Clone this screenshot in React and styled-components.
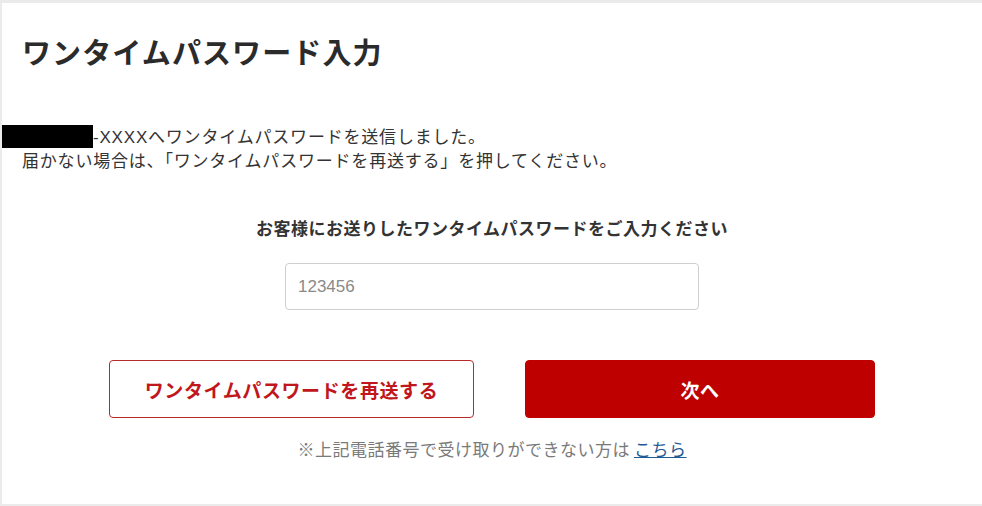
import React from 'react';
import styled, { createGlobalStyle } from 'styled-components';

const GlobalStyle = createGlobalStyle`
  html, body {
    margin: 0;
    padding: 0;
    background: #ebebeb;
  }
  body {
    font-family: "Liberation Sans", "Noto Sans CJK JP", sans-serif;
    color: #333;
  }
`;

const Card = styled.div`
  background: #fff;
  margin: 3px 0 0 2px;
  height: 501px;
  box-sizing: border-box;
  padding: 0 20px;
  overflow: hidden;
`;

const Title = styled.h1`
  margin: 31px 0 0;
  font-size: 29px;
  line-height: 40px;
  font-weight: 700;
  color: #2b2b2b;
  letter-spacing: 1.1px;
`;

const Message = styled.p`
  margin: 51px 0 0;
  font-size: 17px;
  line-height: 24px;
  color: #333;
  letter-spacing: 0.8px;
`;

const Redacted = styled.span`
  display: inline-block;
  width: 93px;
  height: 23px;
  margin-left: -22px;
  background: #000;
  vertical-align: -5px;
`;

const Subtitle = styled.h2`
  margin: 44px 0 0;
  font-size: 17px;
  line-height: 24px;
  font-weight: 700;
  text-align: center;
  color: #333;
  letter-spacing: 0.5px;
`;

const InputRow = styled.div`
  display: flex;
  justify-content: center;
  margin-top: 21px;
`;

const CodeInput = styled.input`
  width: 414px;
  height: 47px;
  box-sizing: border-box;
  border: 1px solid #cfcfcf;
  border-radius: 4px;
  padding: 0 12px;
  font-family: "Liberation Sans", "Noto Sans CJK JP", sans-serif;
  font-size: 17px;
  color: #333;
  outline: none;

  &::placeholder {
    color: #8a8a8a;
  }
`;

const Buttons = styled.div`
  display: flex;
  justify-content: center;
  gap: 51px;
  margin-top: 50px;
`;

const Button = styled.button`
  width: ${(p) => p.$width}px;
  height: 58px;
  box-sizing: border-box;
  border-radius: 4px;
  font-family: "Noto Sans CJK JP", sans-serif;
  font-size: 19px;
  letter-spacing: 0.6px;
  font-weight: 700;
  cursor: pointer;
  border: 1px solid ${(p) => (p.$primary ? '#bf0000' : '#b52a2a')};
  background: ${(p) => (p.$primary ? '#bf0000' : '#fff')};
  color: ${(p) => (p.$primary ? '#fff' : '#c0161c')};
`;

const Note = styled.p`
  margin: 21px 0 0;
  text-align: center;
  font-size: 17px;
  line-height: 24px;
  color: #7a7a7a;
  letter-spacing: 0.5px;
`;

const Link = styled.a`
  color: #1d5a96;
  text-decoration: underline;
  margin-left: 4px;
`;

export default function App() {
  return (
    <>
      <GlobalStyle />
      <Card>
        <Title>ワンタイムパスワード入力</Title>
        <Message>
          <Redacted />
          -XXXXへワンタイムパスワードを送信しました。
          <br />
          届かない場合は、「ワンタイムパスワードを再送する」を押してください。
        </Message>
        <Subtitle>お客様にお送りしたワンタイムパスワードをご入力ください</Subtitle>
        <InputRow>
          <CodeInput placeholder="123456" />
        </InputRow>
        <Buttons>
          <Button $width={365}>ワンタイムパスワードを再送する</Button>
          <Button $width={350} $primary>
            次へ
          </Button>
        </Buttons>
        <Note>
          ※上記電話番号で受け取りができない方は
          <Link href="#">こちら</Link>
        </Note>
      </Card>
    </>
  );
}
